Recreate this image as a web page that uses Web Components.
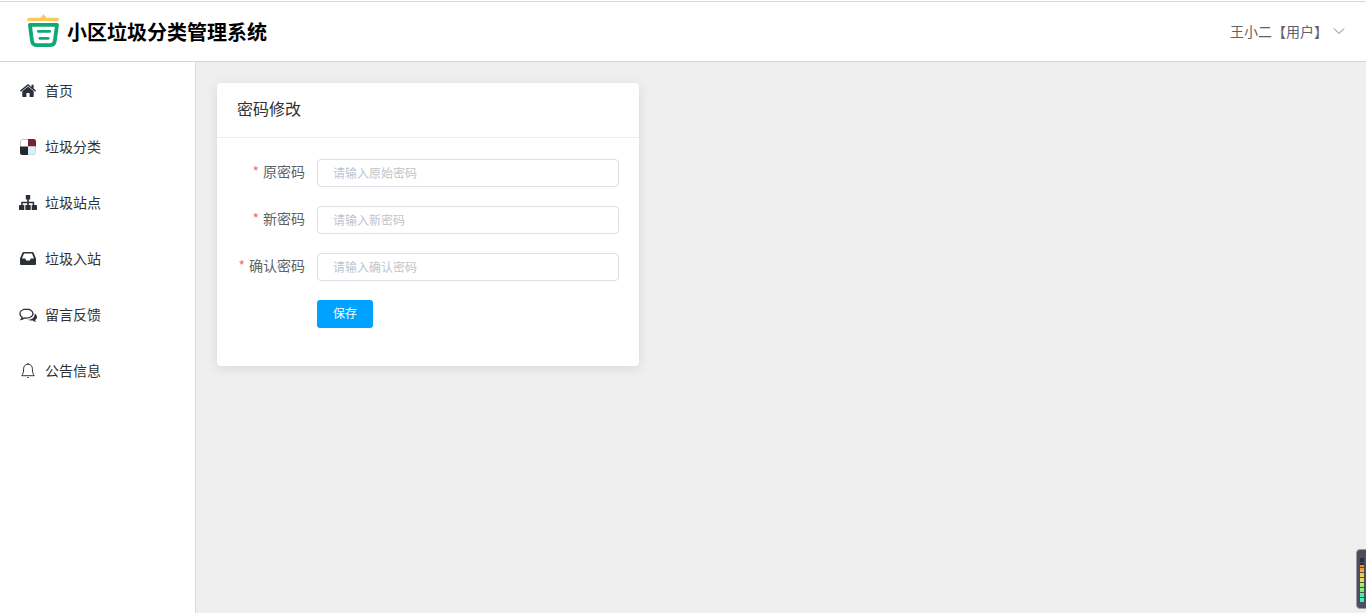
<!DOCTYPE html>
<html lang="zh"><head><meta charset="utf-8"><title>小区垃圾分类管理系统</title>
<style>
html,body{margin:0;height:100%;overflow:hidden}
body{font-family:"Noto Sans CJK SC","Liberation Sans",sans-serif;background:#fff}
</style></head><body>
<app-shell>
  <app-header slot="header" user="王小二【用户】"></app-header>
  <side-menu slot="side">
    <menu-row icon="home">首页</menu-row>
    <menu-row icon="delicious">垃圾分类</menu-row>
    <menu-row icon="sitemap">垃圾站点</menu-row>
    <menu-row icon="inbox">垃圾入站</menu-row>
    <menu-row icon="comments">留言反馈</menu-row>
    <menu-row icon="bell">公告信息</menu-row>
  </side-menu>
  <form-card title="密码修改">
    <form-row label="原密码" placeholder="请输入原始密码"></form-row>
    <form-row label="新密码" placeholder="请输入新密码"></form-row>
    <form-row label="确认密码" placeholder="请输入确认密码"></form-row>
    <save-button>保存</save-button>
  </form-card>
</app-shell>
<level-meter></level-meter>
<script>
const def=(name,html,init)=>customElements.define(name,class extends HTMLElement{
  connectedCallback(){ if(this.shadowRoot) return; const r=this.attachShadow({mode:'open'}); r.innerHTML=html(this); if(init) init(this,r); }
});
def('app-shell',()=>`<style>
:host{display:flex;flex-direction:column;height:613px;box-sizing:border-box;padding-top:1px}
.body{flex:1;display:flex;min-height:0}
.main{flex:1;background:#efefef;padding:21px 21px 0 21px;min-width:0}
</style><slot name="header"></slot><div class="body"><slot name="side"></slot><div class="main"><slot></slot></div></div>`);
def('app-header',h=>`<style>
:host{display:flex;align-items:center;justify-content:space-between;height:61px;box-sizing:border-box;border-top:1px solid #d8d8d8;border-bottom:1px solid #d4d4d4;background:#fff;padding:0 21px 0 27px}
.brand{display:flex;align-items:center;gap:7px}
svg.logo{display:block;width:33px;height:34px;margin-top:-1px}
.t{font-size:20px;font-weight:700;color:#000;line-height:28px;margin-top:0}
.u{display:flex;align-items:center;gap:5px;color:#606266;font-size:14px;margin-top:-1px}
.u svg{display:block;width:12px;height:8px}
</style><div class="brand"><svg class="logo" viewBox="0 0 33 34" fill="none">
<path d="M12.500 4.500 L16.500 .2 L20.500 4.500Z" fill="#f6cd5c"/><rect x="0" y="3.800" width="32" height="3.400" rx="1.700" fill="#f6cd5c"/>
<path d="M2.900 10.800 H30 L27.800 27 Q27.200 31.200 22.800 31.200 H10 Q5.600 31.200 5 27Z" stroke="#10a876" stroke-width="3.800" stroke-linejoin="round"/>
<rect x="10" y="16" width="14" height="2.800" rx="1.300" fill="#10a876"/><rect x="11.500" y="23" width="11" height="2.800" rx="1.300" fill="#10a876"/>
</svg><span class="t">小区垃圾分类管理系统</span></div>
<div class="u"><span>${h.getAttribute('user')}</span><svg viewBox="0 0 12 8" fill="none"><path d="M1 1.500 L6 6.500 L11 1.500" stroke="#7a7d85" stroke-width="1"/></svg></div>`);
def('side-menu',()=>`<style>
:host{display:flex;flex-direction:column;width:196px;flex:none;box-sizing:border-box;border-right:1px solid #dcdcdc;background:#fff}
</style><slot></slot>`);
const icons={
 home:`<path fill="#2b2f36" d="M9 4.600 L3.300 9.200V14.300a.7.7 0 0 0 .7.7H7.400V11H10.600V15H14a.7.7 0 0 0 .7-.7V9.200Z"/><path fill="#2b2f36" d="M9 2 L1 8.600 L1.900 9.700 L9 3.800 L16.100 9.700 L17 8.600 L14.600 6.600V2.800H12.500V4.900Z"/>`,
 delicious:`<rect x="1.500" y="1.500" width="15" height="15" rx="2.500" fill="#fff" stroke="#c4c4c4"/><path fill="#7a1f2b" d="M9 1h5.500A2.500 2.500 0 0 1 17 3.500V8.500H9Z"/><path fill="#24272c" d="M1 8.500h8V17H3.500A2.500 2.500 0 0 1 1 14.500Z"/><path fill="#d8eef8" d="M9 8.500h7.500v5.500a2.500 2.500 0 0 1-2.500 2.500H9Z"/>`,
 sitemap:`<path fill="#2b2f36" d="M6.800 1h4.400v4.500h-1.400v2.300h5.400V11h-1.500V9.300H9.800V11H8.200V9.300H3.700V11H2.200V7.800h6V5.500H6.800Z"/><rect x="0" y="11" width="5.300" height="5" rx=".6" fill="#2b2f36"/><rect x="6.400" y="11" width="5.300" height="5" rx=".6" fill="#2b2f36"/><rect x="12.700" y="11" width="5.300" height="5" rx=".6" fill="#2b2f36"/>`,
 inbox:`<path fill="#2b2f36" fill-rule="evenodd" d="M4.800 2H13.200Q14.200 2 14.700 3L17 8.500V14Q17 15 16 15H2Q1 15 1 14V8.500L3.300 3Q3.800 2 4.800 2ZM5 3.600 L3 8.500H6.300L7.200 10.500H10.800L11.700 8.500H15L13 3.600Z"/>`,
 comments:`<g transform="translate(0 1)"><path fill="none" stroke="#2b2f36" stroke-width="1.300" d="M7.500 2.200C3.700 2.200.9 4.100.9 6.800c0 1.500 1 2.800 2.300 3.600-.2.800-.6 1.400-1 2 1.200-.3 2.200-.8 3-1.500.7.100 1.500.2 2.300.2 3.800 0 6.500-2 6.500-4.300 0-2.700-2.700-4.600-6.500-4.600Z"/><path fill="#2b2f36" d="M15.600 6.400c1.400.8 2.400 2 2.400 3.500 0 1.300-.8 2.300-2 3.100.2.800.6 1.400 1.100 2.100-1.400-.3-2.500-.9-3.300-1.700-.6.100-1.200.1-1.800.1-1.300 0-2.500-.3-3.400-.8 3.600-.1 7-1.900 7-5.300Z"/></g>`,
 bell:`<path fill="none" stroke="#3a3530" stroke-width="1" d="M9 2.200c-2.800 0-4.400 2-4.400 4.700 0 3-.4 5-1.900 6.800h12.600c-1.500-1.800-1.900-3.800-1.900-6.800 0-2.700-1.600-4.700-4.400-4.700Z"/><path fill="#3a3530" d="M8.500 1h1v1.400h-1ZM8 15h2a1 1 0 0 1-2 0Z"/>`
};
def('menu-row',m=>`<style>
:host{display:flex;align-items:center;height:56px;padding-left:19px;gap:8px;font-size:14px;color:#303133}
svg{display:block;width:18px;height:18px;flex:none;margin-top:2px}
span{padding-bottom:1px}
</style><svg viewBox="0 0 18 18">${icons[m.getAttribute('icon')]}</svg><span><slot></slot></span>`);
def('form-card',c=>`<style>
:host{display:block;width:422px;height:283px;box-sizing:border-box;background:#fff;border-radius:4px;box-shadow:0 2px 12px rgba(0,0,0,.1)}
.h{height:55px;box-sizing:border-box;border-bottom:1px solid #ebeef5;padding:0 20px 4px;display:flex;align-items:center;font-size:16px;color:#303133}
.b{display:flex;flex-direction:column;gap:19px;padding:21px 20px 0 20px}
</style><div class="h">${c.getAttribute('title')}</div><div class="b"><slot></slot></div>`);
def('form-row',f=>`<style>
:host{display:flex;align-items:center;height:28px}
.l{width:80px;padding:0 12px 4px 0;box-sizing:border-box;text-align:right;font-size:14px;color:#606266;white-space:nowrap;flex:none}
.l i{font-style:normal;color:#f56c6c;margin-right:4px}
input{flex:1;min-width:0;height:28px;box-sizing:border-box;border:1px solid #dcdfe6;border-radius:4px;padding:0 15px 2px;font:12px "Noto Sans CJK SC","Liberation Sans",sans-serif;color:#606266;outline:none;background:#fff}
input::placeholder{color:#c0c4cc;opacity:1}
</style><span class="l"><i>*</i>${f.getAttribute('label')}</span><input type="password" placeholder="${f.getAttribute('placeholder')}">`);
def('save-button',()=>`<style>
:host{display:flex;margin-left:80px}
button{width:56px;height:28px;border:0;border-radius:3px;background:#00a2ff;color:#fff;font:12px "Noto Sans CJK SC","Liberation Sans",sans-serif;padding:0 0 4px}
</style><button><slot></slot></button>`);
def('level-meter',()=>{
 const cs=['#36f0c4','#3cf0b8','#45eea6','#55ee95','#6bee85','#86ee74','#a0ec68','#baea5e','#d2e858','#e2e052','#ecd24c','#f0c246','#f2b040','#f49a3c','#f5823c','#2c303a','#2c303a','#2c303a'];
 return `<style>
:host{position:fixed;left:1356px;top:549px;width:14px;height:60px;box-sizing:border-box;background:#4b4e5a;border-radius:4px;border:1px solid #9a9ca3;display:flex;flex-direction:column-reverse;gap:.5px;padding:0 0 6px 3px}
i{display:block;width:4px;height:2px;flex:none}
</style>`+cs.map(x=>`<i style="background:${x}"></i>`).join('');
});
</script>
</body></html>
